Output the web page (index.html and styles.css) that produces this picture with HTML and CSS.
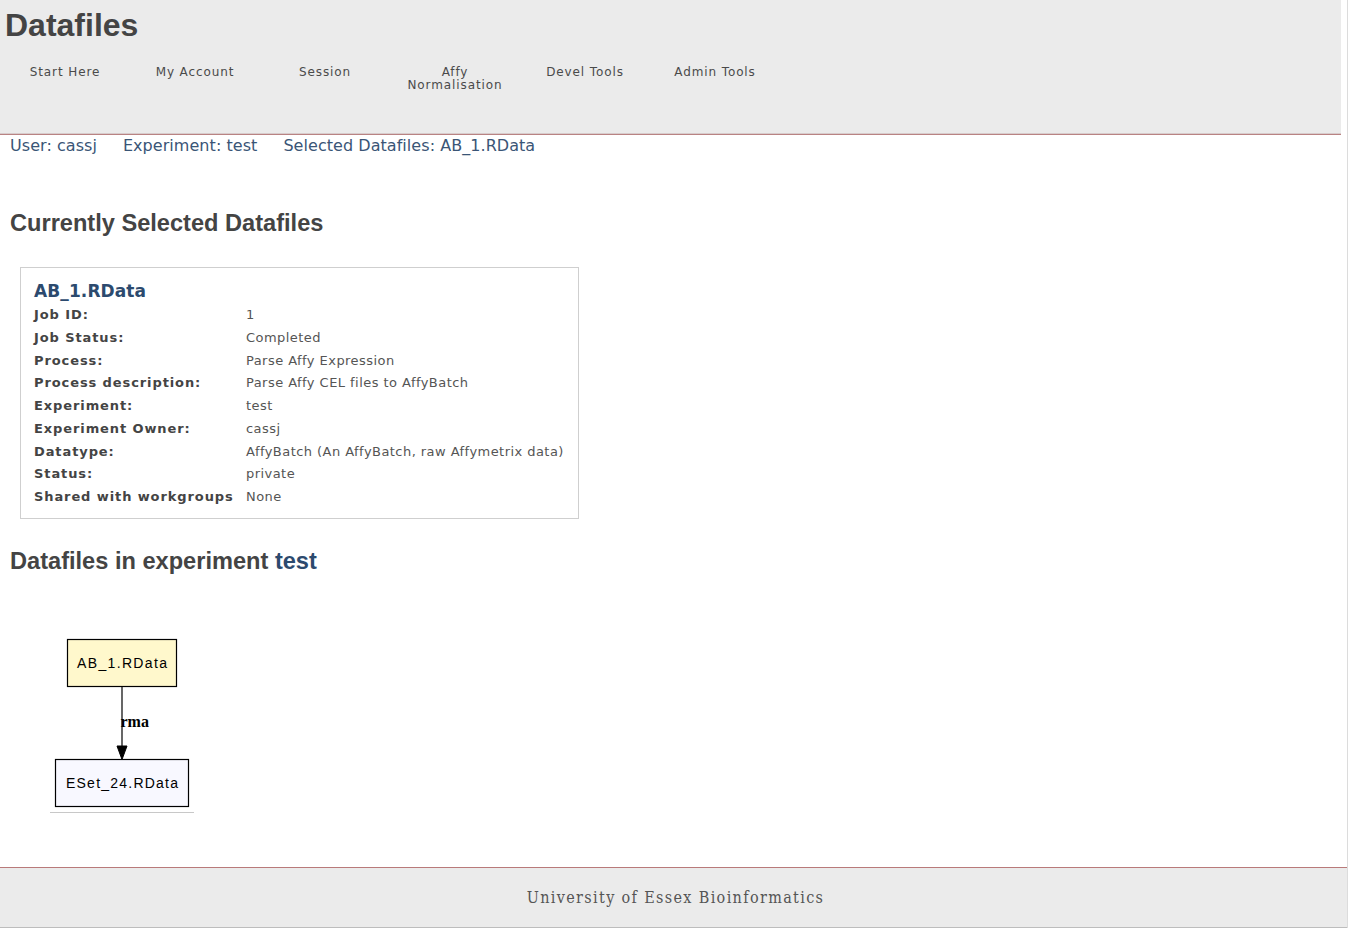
FILE: index.html
```html
<!DOCTYPE html>
<html>
<head>
<meta charset="utf-8">
<title>Datafiles</title>
<link rel="stylesheet" href="styles.css">
</head>
<body>
<div class="page">
  <header class="header">
    <h1 class="site-title">Datafiles</h1>
    <ul class="nav">
      <li>Start Here</li>
      <li>My Account</li>
      <li>Session</li>
      <li>Affy<br>Normalisation</li>
      <li>Devel Tools</li>
      <li>Admin Tools</li>
    </ul>
  </header>

  <main class="content">
    <div class="status-line">
      <span>User: cassj</span>
      <span>Experiment: test</span>
      <span>Selected Datafiles: AB_1.RData</span>
    </div>

    <h2 class="section-title">Currently Selected Datafiles</h2>

    <div class="file-box">
      <div class="file-name">AB_1.RData</div>
      <div class="file-grid">
        <div class="lbl">Job ID:</div><div class="val">1</div>
        <div class="lbl">Job Status:</div><div class="val">Completed</div>
        <div class="lbl">Process:</div><div class="val">Parse Affy Expression</div>
        <div class="lbl">Process description:</div><div class="val">Parse Affy CEL files to AffyBatch</div>
        <div class="lbl">Experiment:</div><div class="val">test</div>
        <div class="lbl">Experiment Owner:</div><div class="val">cassj</div>
        <div class="lbl">Datatype:</div><div class="val">AffyBatch (An AffyBatch, raw Affymetrix data)</div>
        <div class="lbl">Status:</div><div class="val">private</div>
        <div class="lbl">Shared with workgroups</div><div class="val">None</div>
      </div>
    </div>

    <h2 class="section-title second">Datafiles in experiment <span class="accent">test</span></h2>

    <svg class="graph" width="144" height="190" viewBox="0 0 144 190">
      <rect x="17.5" y="17.5" width="109" height="47" fill="#fff8cc" stroke="#000" stroke-width="1.2"/>
      <text x="72" y="45.5" text-anchor="middle" class="node-text" textLength="90" lengthAdjust="spacing">AB_1.RData</text>
      <line x1="72" y1="64.5" x2="72" y2="124" stroke="#000" stroke-width="1.2"/>
      <polygon points="67,124 77,124 72,137.5" fill="#000" stroke="#000" stroke-width="1"/>
      <text x="70.5" y="104.5" class="edge-text">rma</text>
      <rect x="5.5" y="137.5" width="133" height="47" fill="#f8f8ff" stroke="#000" stroke-width="1.2"/>
      <text x="72" y="165.5" text-anchor="middle" class="node-text" textLength="112" lengthAdjust="spacing">ESet_24.RData</text>
    </svg>
  </main>

  <footer class="footer">University of Essex Bioinformatics</footer>
</div>
</body>
</html>
```

FILE: styles.css
```css
html, body {
  margin: 0;
  padding: 0;
  background: #fff;
}

body {
  font-family: "DejaVu Sans", Verdana, sans-serif;
  color: #444;
}

.page {
  width: 1347px;
  min-height: 928px;
  border-right: 1px solid #dcdcdc;
  display: flex;
  flex-direction: column;
}

.header {
  width: 1341px;
  height: 134px;
  background: #ebebeb;
  border-bottom: 1px solid #b98383;
  box-shadow: inset 0 -1px 0 #d8cccc;
  box-sizing: content-box;
}

.site-title {
  margin: 0;
  padding: 6px 0 0 5px;
  font-family: "Liberation Sans", Arial, sans-serif;
  font-weight: bold;
  font-size: 32px;
  line-height: 38px;
  color: #444;
}

.nav {
  list-style: none;
  margin: 22px 0 0 0;
  padding: 0;
  display: flex;
}

.nav li {
  width: 130px;
  text-align: center;
  font-size: 12px;
  letter-spacing: 0.9px;
  line-height: 13px;
  color: #4a4a4a;
}

.content {
  padding: 0 10px;
  flex: 1;
}

.status-line {
  display: flex;
  gap: 26px;
  margin-top: 1px;
  font-size: 16px;
  line-height: 19px;
  letter-spacing: 0.05px;
  color: #3a5576;
}

.section-title {
  margin: 54px 0 0 0;
  font-family: "Liberation Sans", Arial, sans-serif;
  font-weight: bold;
  font-size: 23.6px;
  line-height: 28px;
  color: #444;
}

.section-title.second {
  margin-top: 28px;
}

.accent {
  color: #2c4a6e;
}

.file-box {
  margin: 30px 0 0 10px;
  width: 531px;
  padding: 12px 13px 9px 13px;
  border: 1px solid #cfcfcf;
}

.file-name {
  font-weight: bold;
  font-size: 17px;
  line-height: 23px;
  letter-spacing: 0.1px;
  color: #2c4a6e;
}

.file-grid {
  display: grid;
  grid-template-columns: 212px auto;
  font-size: 13px;
  line-height: 22.75px;
  margin-top: 1px;
}

.lbl {
  font-weight: bold;
  letter-spacing: 0.9px;
  color: #444;
}

.val {
  color: #555;
  letter-spacing: 0.45px;
}

.graph {
  display: block;
  margin: 47px 0 0 40px;
  border-bottom: 1px solid #c8c8c8;
}

.node-text {
  font-family: "Liberation Sans", Arial, sans-serif;
  font-size: 14px;
  fill: #000;
}

.edge-text {
  font-family: "Liberation Serif", "Times New Roman", serif;
  font-weight: bold;
  font-size: 16px;
  fill: #000;
}

.footer {
  margin-top: 54px;
  height: 59px;
  background: #ebebeb;
  border-top: 1px solid #b97a7a;
  border-bottom: 1px solid #bdbdbd;
  display: flex;
  align-items: center;
  justify-content: center;
  padding-left: 4px;
  font-family: "DejaVu Serif", "Liberation Serif", serif;
  font-stretch: condensed;
  font-size: 16px;
  letter-spacing: 1.35px;
  color: #555;
}
```
